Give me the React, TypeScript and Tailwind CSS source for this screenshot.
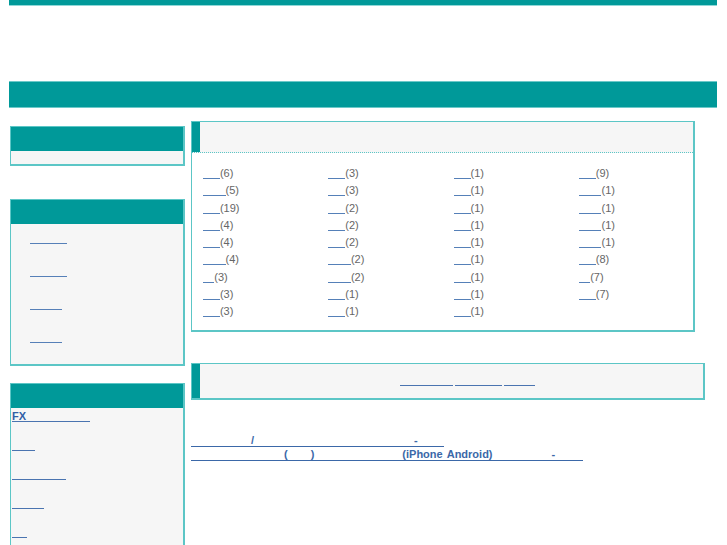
import React from "react";

const CH = 5.65;

type Cell = [number, string];

const columns: Cell[][] = [
  [[3, "(6)"], [4, "(5)"], [3, "(19)"], [3, "(4)"], [3, "(4)"], [4, "(4)"], [2, "(3)"], [3, "(3)"], [3, "(3)"]],
  [[3, "(3)"], [3, "(3)"], [3, "(2)"], [3, "(2)"], [3, "(2)"], [4, "(2)"], [4, "(2)"], [3, "(1)"], [3, "(1)"]],
  [[3, "(1)"], [3, "(1)"], [3, "(1)"], [3, "(1)"], [3, "(1)"], [3, "(1)"], [3, "(1)"], [3, "(1)"], [3, "(1)"]],
  [[3, "(9)"], [4, "(1)"], [4, "(1)"], [4, "(1)"], [4, "(1)"], [3, "(8)"], [2, "(7)"], [3, "(7)"]],
];

const sideLinks2 = [37, 37, 32, 32];
const sideLinks3 = [23, 54, 32, 15];

function Gap({ w }: { w: number }) {
  return <span className="inline-block" style={{ width: w }} />;
}

export default function App() {
  return (
    <div className="w-[727px] h-[545px] overflow-hidden bg-white font-['Liberation_Sans',Arial,sans-serif] text-[11px]">
      {/* top bar */}
      <div className="ml-[9px] w-[708px] h-[6px] bg-[#009999] border-b border-[#8fd8d8]" />
      {/* title bar */}
      <div className="mt-[75px] ml-[9px] w-[708px] h-[27px] bg-[#009999] border-y border-[#6cc9c9]" />

      <div className="flex items-start">
        {/* left column */}
        <aside className="ml-[10px] w-[175px] mt-[18px] flex flex-col">
          <div className="border border-r-2 border-b-2 border-[#5cc6c6] bg-[#f6f6f6]">
            <div className="h-[24px] bg-[#009999]" />
            <div className="h-[13px]" />
          </div>

          <div className="mt-[33px] border border-r-2 border-b-2 border-[#5cc6c6] bg-[#f6f6f6]">
            <div className="h-[24px] bg-[#009999]" />
            <ul className="pt-[8px] pl-[19px]">
              {sideLinks2.map((w, i) => (
                <li key={i} className="h-[33px]">
                  <a className="block h-[12px] border-b border-[#5680b8]" style={{ width: w }} />
                </li>
              ))}
            </ul>
          </div>

          <div className="mt-[17px] border border-r-2 border-b-2 border-[#5cc6c6] bg-[#f6f6f6] h-[200px]">
            <div className="h-[24px] bg-[#009999]" />
            <ul className="pt-[4px] pl-[1px]">
              <li className="h-[29px]">
                <a className="flex items-end h-[10px] w-[78px] border-b border-[#4a74b0] text-[#2f5ea6] font-semibold text-[11px] leading-[10px]">
                  FX
                </a>
              </li>
              {sideLinks3.map((w, i) => (
                <li key={i} className="h-[29px]">
                  <a className="block h-[10px] border-b border-[#4a74b0]" style={{ width: w }} />
                </li>
              ))}
            </ul>
          </div>
        </aside>

        {/* main column */}
        <main className="ml-[6px] mt-[13px] w-[514px] flex flex-col">
          <section className="w-[504px] border border-r-2 border-b-2 border-[#5cc6c6] bg-white">
            <div className="h-[31px] flex bg-[#f6f6f6] border-b border-dotted border-[#5cc6c6]">
              <div className="w-[8px] bg-[#009999]" />
            </div>
            <div className="flex pl-[11px] pt-[12px] pb-[10px] text-[#666666]">
              {columns.map((col, ci) => (
                <div key={ci} className="w-[125.3px] shrink-0">
                  {col.map(([n, label], ri) => (
                    <div key={ri} className="h-[17.25px] leading-[17.25px] whitespace-nowrap">
                      <a
                        className="inline-block h-[9px] border-b border-[#5580b8] align-[-2px]"
                        style={{ width: n * CH }}
                      />
                      <span>{label}</span>
                    </div>
                  ))}
                </div>
              ))}
            </div>
          </section>

          <section className="mt-[31px] w-[514px] h-[37px] flex border border-r-2 border-b-2 border-[#5cc6c6] bg-[#f6f6f6]">
            <div className="w-[8px] bg-[#009999]" />
            <div className="flex-1 flex justify-center pl-[32px] pt-[12px] gap-[2px]">
              <a className="block h-[10px] w-[53px] border-b border-[#4a74b0]" />
              <a className="block h-[10px] w-[47px] border-b border-[#4a74b0]" />
              <a className="block h-[10px] w-[31px] border-b border-[#4a74b0]" />
            </div>
          </section>

          <div className="mt-[34px] flex flex-col text-[#3b68a8] font-bold text-[11px]">
            <div className="h-[14px]">
              <a className="inline-flex items-end h-[11px] leading-[11px] border-b border-[#3b68a8] whitespace-nowrap">
                <Gap w={60} />
                <span>/</span>
                <Gap w={160} />
                <span>-</span>
                <Gap w={26} />
              </a>
            </div>
            <div className="h-[14px]">
              <a className="inline-flex items-end h-[11px] leading-[11px] border-b border-[#3b68a8] whitespace-nowrap">
                <Gap w={93} />
                <span>(</span>
                <Gap w={23} />
                <span>)</span>
                <Gap w={88} />
                <span>(iPhone</span>
                <Gap w={4} />
                <span>Android)</span>
                <Gap w={59} />
                <span>-</span>
                <Gap w={28} />
              </a>
            </div>
          </div>
        </main>
      </div>
    </div>
  );
}
